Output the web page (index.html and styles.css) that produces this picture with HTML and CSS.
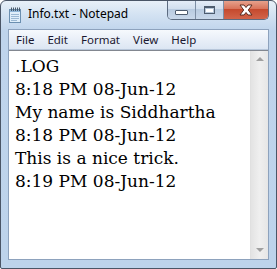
FILE: index.html
```html
<!DOCTYPE html>
<html>
<head>
<meta charset="utf-8">
<link rel="stylesheet" href="styles.css">
</head>
<body>
<div class="window">
  <div class="titlebar">
    <svg class="appicon" width="16" height="16" viewBox="0 0 16 16">
      <rect x="2.5" y="2.5" width="11" height="13" fill="#dfeefa" stroke="#6b8fb0"/>
      <rect x="3" y="3" width="10" height="2" fill="#8fb6d8"/>
      <line x1="4" y1="7.5" x2="12" y2="7.5" stroke="#9bb8d3"/>
      <line x1="4" y1="9.5" x2="12" y2="9.5" stroke="#9bb8d3"/>
      <line x1="4" y1="11.5" x2="12" y2="11.5" stroke="#9bb8d3"/>
      <line x1="4" y1="13.5" x2="10" y2="13.5" stroke="#9bb8d3"/>
      <g stroke="#4a5a6a" stroke-width="1">
        <line x1="4.5" y1="0.5" x2="4.5" y2="4"/>
        <line x1="6.5" y1="0.5" x2="6.5" y2="4"/>
        <line x1="8.5" y1="0.5" x2="8.5" y2="4"/>
        <line x1="10.5" y1="0.5" x2="10.5" y2="4"/>
        <line x1="12.5" y1="0.5" x2="12.5" y2="4"/>
      </g>
    </svg>
    <span class="title">Info.txt - Notepad</span>
    <div class="caption">
      <div class="cbtn min"><span class="minbar"></span></div>
      <div class="cbtn max"><span class="maxbox"></span></div>
      <div class="cbtn close">
        <svg width="16" height="12" viewBox="0 0 16 12">
          <path d="M2 1 H6 L8 3.5 L10 1 H14 L10.3 6 L14 11 H10 L8 8.5 L6 11 H2 L5.7 6 Z" fill="#ffffff" stroke="#5a2a1e" stroke-width="1" stroke-linejoin="round"/>
        </svg>
      </div>
    </div>
  </div>
  <div class="client">
    <div class="menubar">
      <span class="mi">File</span>
      <span class="mi">Edit</span>
      <span class="mi">Format</span>
      <span class="mi">View</span>
      <span class="mi">Help</span>
    </div>
    <div class="editor">
      <div class="text">
        <div class="line">.LOG</div>
        <div class="line">8:18 PM 08-Jun-12</div>
        <div class="line">My name is Siddhartha</div>
        <div class="line">8:18 PM 08-Jun-12</div>
        <div class="line">This is a nice trick.</div>
        <div class="line">8:19 PM 08-Jun-12</div>
      </div>
      <div class="scrollbar">
        <span class="arrow up"></span>
        <span class="arrow down"></span>
      </div>
    </div>
  </div>
</div>
</body>
</html>
```
FILE: styles.css
```css
html, body {
  margin: 0;
  padding: 0;
  background: #ffffff;
}
.window {
  box-sizing: border-box;
  width: 277px;
  height: 269px;
  border: 1px solid #4a5566;
  border-radius: 6px 6px 2px 2px;
  background: linear-gradient(180deg, #e8f0f8 0px, #d3e2f2 14px, #bfd4ec 30px, #bdd3eb 100%);
  display: flex;
  flex-direction: column;
  overflow: hidden;
}
.titlebar {
  height: 28px;
  display: flex;
  align-items: flex-start;
  padding-left: 6px;
  padding-right: 7px;
  flex-shrink: 0;
}
.appicon {
  margin-top: 6px;
}
.title {
  margin-left: 5px;
  margin-top: 5px;
  font-family: "Noto Sans", "Open Sans", sans-serif;
  font-size: 12px;
  color: #000000;
  line-height: 16px;
}
.caption {
  margin-left: auto;
  display: flex;
  height: 19px;
  margin-top: -1px;
  border: 1px solid #5c6b80;
  border-top: none;
  border-radius: 0 0 5px 5px;
  overflow: hidden;
}
.cbtn {
  height: 19px;
  display: flex;
  align-items: center;
  justify-content: center;
}
.min, .max {
  width: 27px;
  background: linear-gradient(180deg, #e6eef8 0%, #d2dfee 45%, #b9cbe0 50%, #c9d8ea 100%);
  border-right: 1px solid #7d8ea4;
}
.minbar {
  width: 11px;
  height: 3px;
  margin-top: 6px;
  background: #ffffff;
  border: 1px solid #4e5c6e;
  border-radius: 1px;
}
.maxbox {
  width: 9px;
  height: 5px;
  border: 1px solid #4e5c6e;
  border-top-width: 2px;
  background: #ffffff;
  box-shadow: inset 0 0 0 1px #b8c8da;
}
.close {
  width: 44px;
  background: linear-gradient(180deg, #e8a792 0%, #d9755c 45%, #c54a2e 50%, #d2644a 100%);
}
.client {
  flex: 1;
  margin: 0 7px 8px 7px;
  border: 1px solid #8da2bd;
  display: flex;
  flex-direction: column;
  min-height: 0;
}
.menubar {
  height: 19px;
  background: linear-gradient(180deg, #f6f9fd 0%, #e9eff8 50%, #dce6f3 100%);
  border-bottom: 1px solid #b7c6da;
  display: flex;
  align-items: center;
  padding-left: 7px;
  flex-shrink: 0;
}
.mi {
  font-family: "Noto Sans", "Open Sans", sans-serif;
  font-size: 11.5px;
  color: #1b1830;
  margin-right: 13px;
  line-height: 16px;
}
.editor {
  flex: 1;
  display: flex;
  background: #ffffff;
  border-top: 1px solid #828790;
  min-height: 0;
}
.text {
  flex: 1;
  padding: 4px 0 0 6px;
  font-family: "DejaVu Serif", serif;
  font-size: 17px;
  line-height: 23px;
  color: #000000;
  overflow: hidden;
}
.line {
  white-space: nowrap;
}
.scrollbar {
  width: 17px;
  background: linear-gradient(90deg, #e3e3e3 0%, #efefef 50%, #e6e6e6 100%);
  border-left: 1px solid #e0e0e0;
  display: flex;
  flex-direction: column;
  justify-content: space-between;
  align-items: center;
  padding: 6px 0 7px 0;
}
.arrow {
  width: 0;
  height: 0;
  border-left: 4px solid transparent;
  border-right: 4px solid transparent;
}
.arrow.up {
  border-bottom: 4px solid #a0a0a0;
}
.arrow.down {
  border-top: 4px solid #a0a0a0;
}
```
